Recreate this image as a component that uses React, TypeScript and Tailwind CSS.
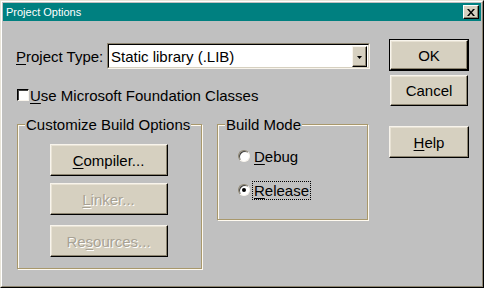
import React from 'react';

const FONT = "font-['Liberation_Sans',Arial,sans-serif]";

const WinButton: React.FC<{
  children: React.ReactNode;
  className?: string;
  disabled?: boolean;
  isDefault?: boolean;
}> = ({ children, className = '', disabled, isDefault }) => {
  const inner = (
    <div
      className={`flex h-full w-full items-center justify-center border border-t-[#f8f4ec] border-l-[#f8f4ec] border-b-black border-r-black bg-[#d6d0c0] shadow-[inset_-1px_-1px_0_#8c8470,inset_1px_1px_0_#e8e2d4] text-[15px] leading-none ${
        disabled
          ? 'text-[#a8a294] [text-shadow:1px_1px_0_#fff]'
          : 'text-black'
      }`}
    >
      {children}
    </div>
  );
  if (isDefault) {
    return <div className={`border border-black ${className}`}>{inner}</div>;
  }
  return <div className={className}>{inner}</div>;
};

const Radio: React.FC<{ checked?: boolean }> = ({ checked }) => (
  <span className="flex h-[12px] w-[12px] items-center justify-center rounded-full border border-t-[#8c8470] border-l-[#8c8470] border-b-[#f8f4ec] border-r-[#f8f4ec] bg-white shadow-[inset_1px_1px_0_#404040]">
    {checked && <span className="h-[4px] w-[4px] rounded-full bg-black" />}
  </span>
);

const GroupBox: React.FC<{
  title: string;
  className?: string;
  children: React.ReactNode;
}> = ({ title, className = '', children }) => (
  <fieldset
    className={`border border-[#a8986c] shadow-[inset_1px_1px_0_#fffaf0,1px_1px_0_#fffaf0] ${className}`}
  >
    <legend className="ml-[7px] bg-[#c0c0c0] px-[1px] text-[15px] leading-[17px]">
      {title}
    </legend>
    {children}
  </fieldset>
);

export default function App() {
  return (
    <div
      className={`h-[288px] w-[484px] border border-t-[#e8e4d8] border-l-[#e8e4d8] border-b-black border-r-black bg-[#c0c0c0] ${FONT}`}
    >
      <div className="flex h-full w-full flex-col border border-t-white border-l-white border-b-[#8c8470] border-r-[#8c8470] p-[1px]">
        {/* title bar */}
        <div className="flex h-[18px] items-center justify-between bg-[#008080] pl-[3px] pr-[2px]">
          <span className="text-[11px] leading-none text-white">Project Options</span>
          <div className="flex h-[14px] w-[16px] items-center justify-center border border-t-white border-l-white border-b-black border-r-black bg-[#d6d0c0] shadow-[inset_-1px_-1px_0_#8c8470]">
            <svg width="8" height="7" viewBox="0 0 8 7">
              <path d="M0 0h2l2 2.5L6 0h2L5 3.5 8 7H6L4 4.5 2 7H0l3-3.5z" fill="#000" />
            </svg>
          </div>
        </div>

        {/* body */}
        <div className="flex flex-1 text-black">
          <div className="flex w-[372px] flex-col pl-[13px]">
            <div className="mt-[22px] flex h-[26px] items-center">
              <span className="w-[91px] text-[15px] leading-none">
                <span className="underline underline-offset-2">P</span>roject Type:
              </span>
              <div className="flex h-[26px] w-[263px] items-center border border-t-[#8c8470] border-l-[#8c8470] border-b-[#f8f4ec] border-r-[#f8f4ec]">
                <div className="flex h-full w-full items-center border border-t-black border-l-black border-b-[#d6d0c0] border-r-[#d6d0c0] bg-white pl-[2px] pr-[1px]">
                  <span className="flex-1 text-[15px] leading-none">Static library (.LIB)</span>
                  <div className="flex h-[21px] w-[15px] items-end justify-center border border-t-[#f8f4ec] border-l-[#f8f4ec] border-b-black border-r-black bg-[#d6d0c0] pb-[7px] shadow-[inset_-1px_-1px_0_#8c8470]">
                    <svg width="5" height="3" viewBox="0 0 5 3">
                      <path d="M0 0h5L2.5 3z" fill="#000" />
                    </svg>
                  </div>
                </div>
              </div>
            </div>

            <div className="mt-[17px] flex h-[18px] items-center gap-[1px] pl-[1px]">
              <span className="h-[12px] w-[12px] border border-t-black border-l-black border-b-[#f8f4ec] border-r-[#f8f4ec] bg-white shadow-[inset_1px_1px_0_#404040]" />
              <span className="text-[15px] leading-none">
                <span className="underline underline-offset-2">U</span>se Microsoft Foundation Classes
              </span>
            </div>

            <div className="mt-[12px] flex items-start gap-[15px] pl-[1px]">
              <GroupBox title="Customize Build Options" className="h-[153px] w-[185px]">
                <div className="mt-[11px] flex flex-col items-center gap-[7px] pr-[2px]">
                  <WinButton className="h-[32px] w-[118px]">
                    <span>
                      <span className="underline underline-offset-2">C</span>ompiler...
                    </span>
                  </WinButton>
                  <WinButton className="h-[32px] w-[118px]" disabled>
                    <span>
                      <span className="underline underline-offset-2">L</span>inker...
                    </span>
                  </WinButton>
                  <WinButton className="mt-[3px] h-[32px] w-[118px]" disabled>
                    <span>
                      Re<span className="underline underline-offset-2">s</span>ources...
                    </span>
                  </WinButton>
                </div>
              </GroupBox>

              <GroupBox title="Build Mode" className="h-[104px] w-[151px]">
                <div className="mt-[14px] flex flex-col gap-[16px] pl-[20px]">
                  <div className="flex h-[18px] items-center gap-[2px]">
                    <Radio />
                    <span className="border border-transparent px-[1px] text-[15px] leading-none">
                      <span className="underline underline-offset-2">D</span>ebug
                    </span>
                  </div>
                  <div className="flex h-[18px] items-center gap-[2px]">
                    <Radio checked />
                    <span className="border border-dotted border-black px-[1px] py-[1px] text-[15px] leading-none">
                      <span className="underline underline-offset-2">R</span>elease
                    </span>
                  </div>
                </div>
              </GroupBox>
            </div>
          </div>

          <div className="ml-[14px] flex flex-col">
            <WinButton isDefault className="mt-[18px] h-[32px] w-[80px]">
              OK
            </WinButton>
            <WinButton className="ml-[1px] mt-[4px] h-[31px] w-[78px]">Cancel</WinButton>
            <WinButton className="mt-[20px] h-[32px] w-[80px]">
              <span>
                <span className="underline underline-offset-2">H</span>elp
              </span>
            </WinButton>
          </div>
        </div>
      </div>
    </div>
  );
}
